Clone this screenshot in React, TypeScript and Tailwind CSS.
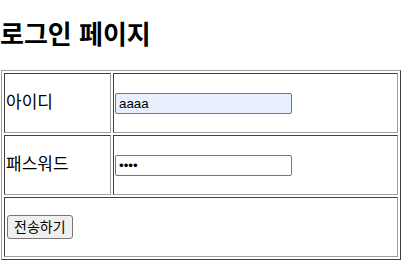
import { useState } from "react";

const FONT = { fontFamily: '"Liberation Sans", "Noto Sans CJK KR", sans-serif' };

export default function App() {
  const [id, setId] = useState("aaaa");
  const [pw, setPw] = useState("aaaa");

  const cell =
    "border border-t-[#404040] border-l-[#404040] border-b-[#a0a0a0] border-r-[#a0a0a0] p-px align-middle";

  return (
    <div className="bg-white text-black min-h-[273px]" style={FONT}>
      <h2 className="text-[26px] font-bold leading-[32px] pt-[19px] pb-[19px] m-0">로그인 페이지</h2>

      {/* login form table */}
      <table className="ml-px w-[400px] border-separate border-spacing-[2px] border border-t-[#a0a0a0] border-l-[#a0a0a0] border-b-[#404040] border-r-[#404040]">
        <tbody>
          <tr className="h-[60px]">
            <td className={`${cell} w-[107px] text-[17px]`}>아이디</td>
            <td className={cell}>
              <input
                type="text"
                value={id}
                onChange={(e) => setId(e.target.value)}
                className="block w-[177px] h-[21px] border border-[#767676] rounded-[2px] bg-[#e8f0fe] px-[3px] text-[13.33px] outline-none"
                style={FONT}
              />
            </td>
          </tr>
          <tr className="h-[60px]">
            <td className={`${cell} text-[17px]`}>패스워드</td>
            <td className={cell}>
              <input
                type="password"
                value={pw}
                onChange={(e) => setPw(e.target.value)}
                className="block w-[177px] h-[21px] border border-[#767676] rounded-[2px] bg-white px-[3px] text-[13.33px] outline-none"
                style={FONT}
              />
            </td>
          </tr>
          <tr className="h-[60px]">
            <td colSpan={2} className={cell}>
              <button
                type="button"
                className="ml-px h-[24px] px-[6px] border border-[#767676] rounded-[3px] bg-[#efefef] text-[14px] leading-none"
                style={FONT}
              >
                전송하기
              </button>
            </td>
          </tr>
        </tbody>
      </table>
    </div>
  );
}
